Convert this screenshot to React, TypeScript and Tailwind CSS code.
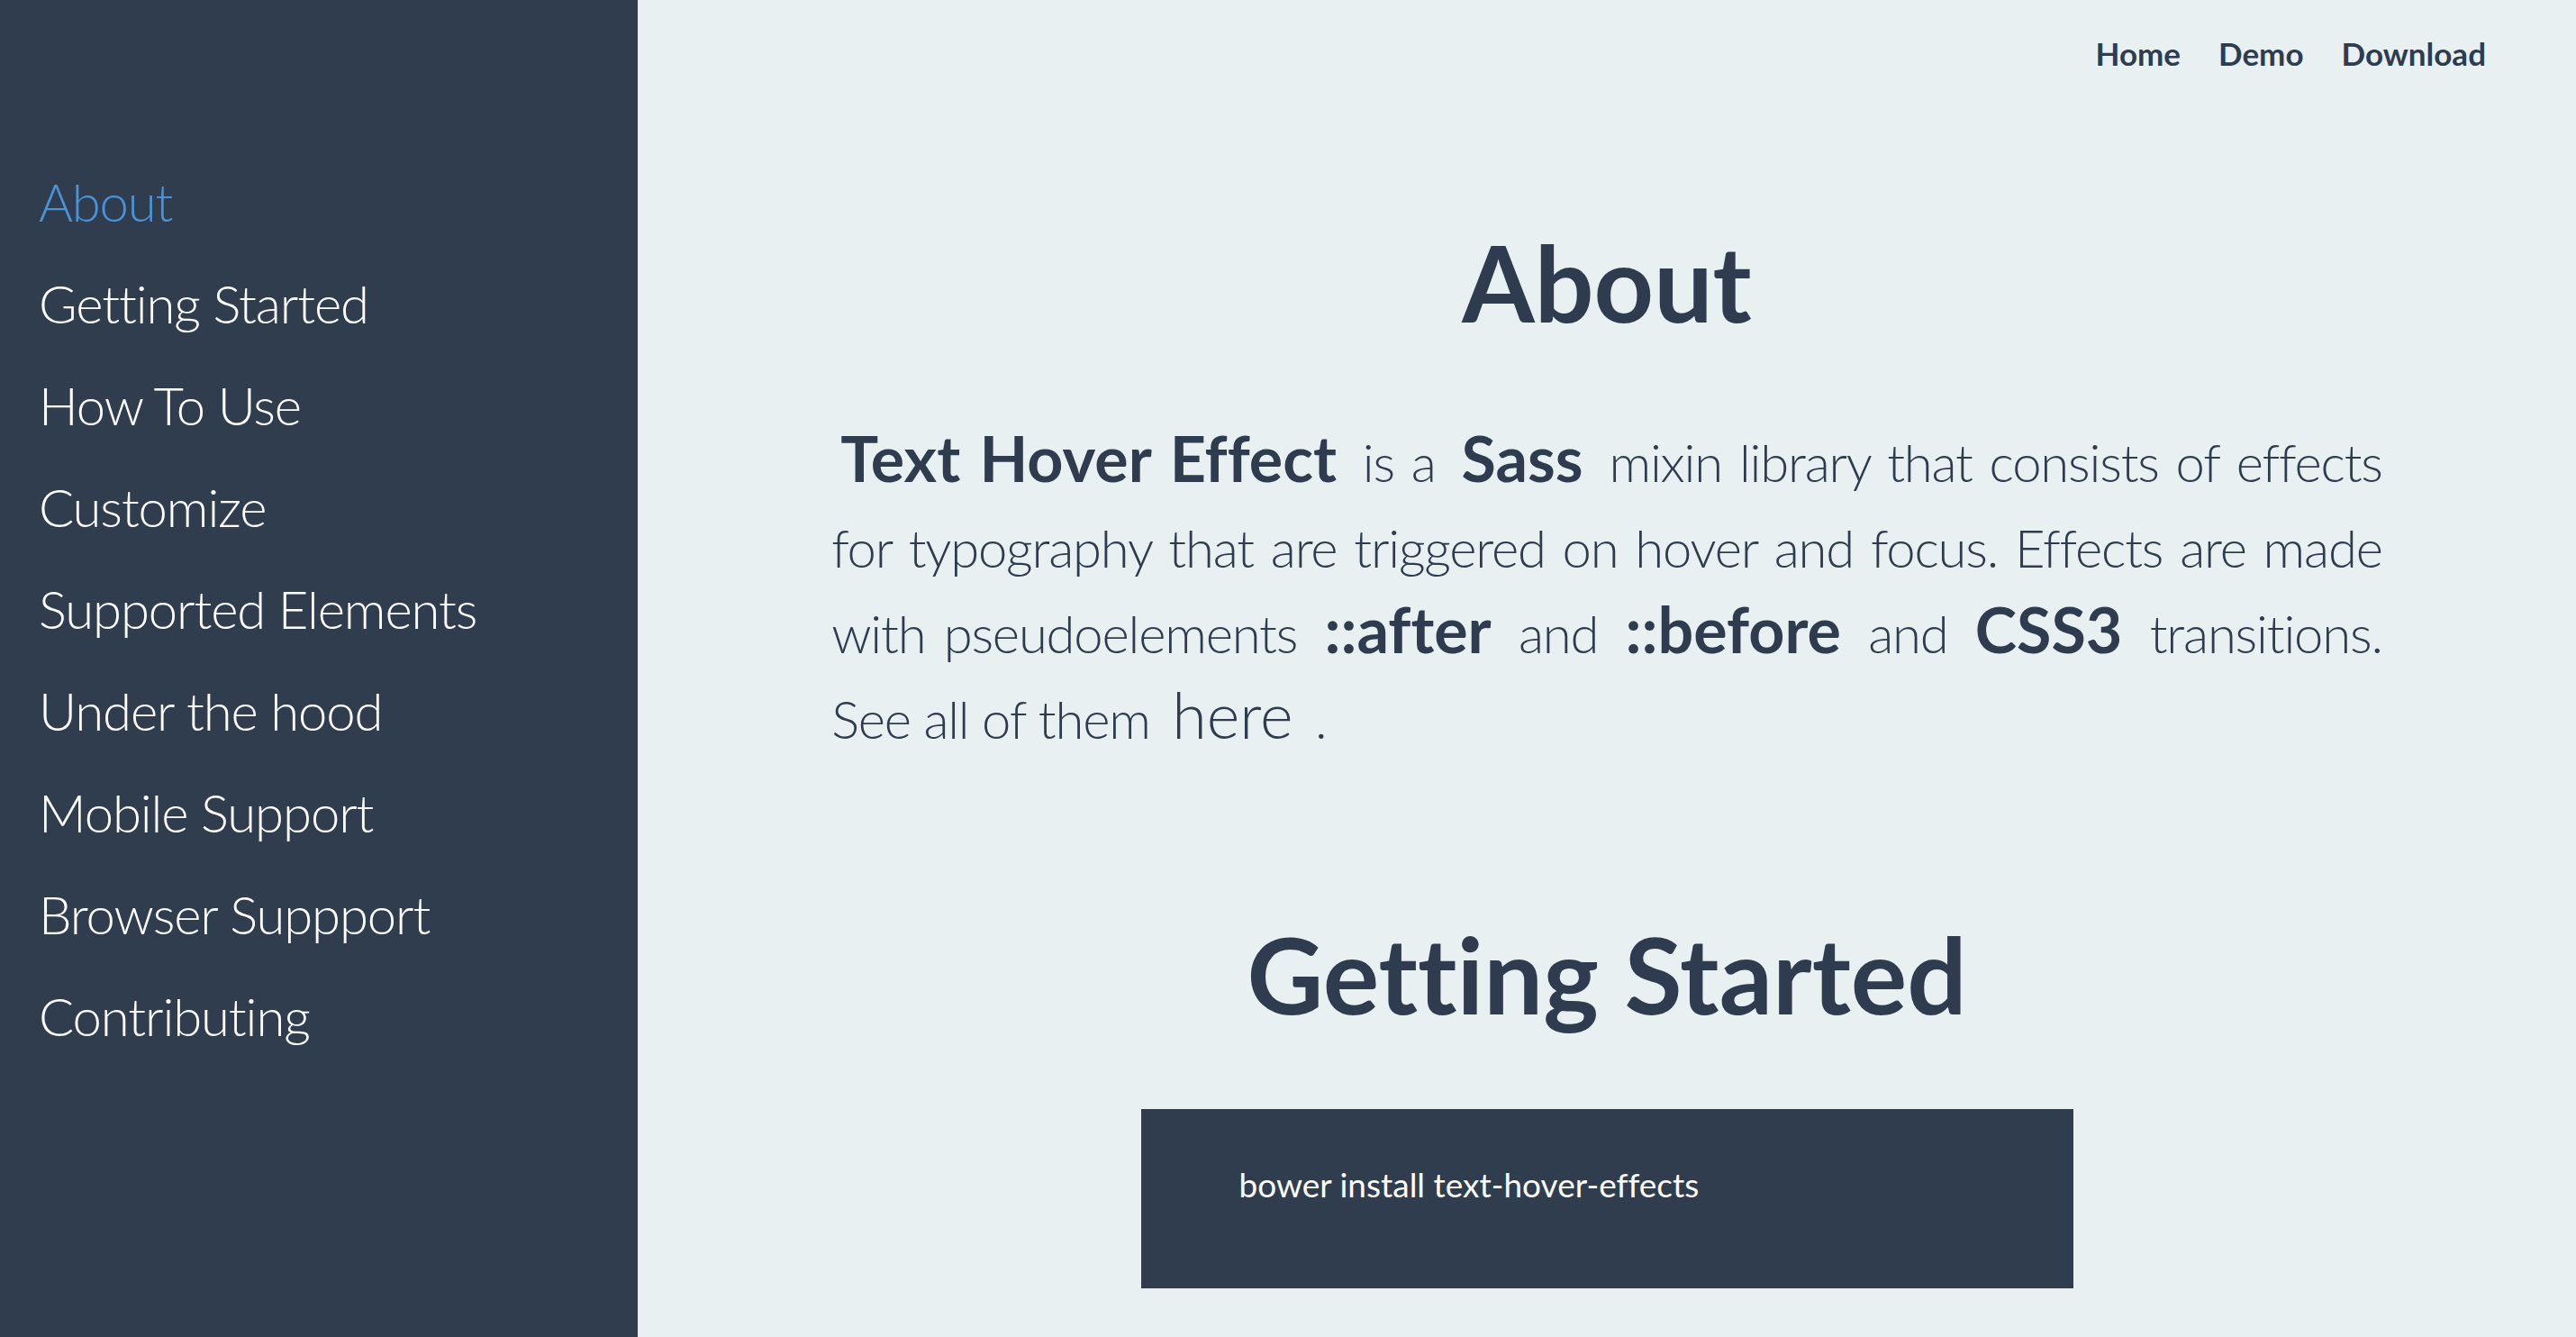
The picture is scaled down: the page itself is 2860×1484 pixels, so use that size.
const menu = [
  "About",
  "Getting Started",
  "How To Use",
  "Customize",
  "Supported Elements",
  "Under the hood",
  "Mobile Support",
  "Browser Suppport",
  "Contributing",
];

const links = ["Home", "Demo", "Download"];

function Em({ children }: { children: React.ReactNode }) {
  return (
    <strong className="px-[10px] text-[70px] font-bold leading-none tracking-normal">{children}</strong>
  );
}

export default function App() {
  return (
    <div className="flex h-screen overflow-hidden bg-[#e8f0f2] font-['Lato',sans-serif] text-[#2f3c4f] [font-variant-ligatures:none]">
      <aside className="w-[708px] shrink-0 bg-[#303d4f] pl-[43px] pt-[189px]">
        <ul className="flex flex-col gap-[43px]">
          {menu.map((item, i) => (
            <li
              key={item}
              className={`text-[58px] font-light leading-[70px] tracking-[-1.1px] ${i === 0 ? "text-[#4a93d8]" : "text-white"}`}
            >
              {item}
            </li>
          ))}
        </ul>
      </aside>

      <main className="flex-1">
        <nav className="flex justify-end gap-[42px] pr-[100px] pt-[38px]">
          {links.map((l) => (
            <a key={l} className="text-[35px] font-bold leading-[43px]">
              {l}
            </a>
          ))}
        </nav>

        <section className="mt-[162px] flex flex-col items-center">
          <h1 className="text-[116px] font-bold leading-[142px]">About</h1>
          <p className="mt-[80px] w-[80%] text-justify text-[58px] font-light leading-[95px] tracking-[-1.2px]">
            <Em>Text Hover Effect</Em> is a <Em>Sass</Em> mixin library that consists of effects for
            typography that are triggered on hover and focus. Effects are made with pseudoelements{" "}
            <Em>::after</Em> and <Em>::before</Em> and <Em>CSS3</Em> transitions. See all of them{" "}
            <a className="px-[10px] text-[70px] leading-none tracking-normal">here</a> .
          </p>

          <h1 className="mt-[165px] text-[117px] font-bold leading-[142px]">Getting Started</h1>
          <pre className="mt-[79px] h-[199px] w-[1035px] bg-[#303d4f] pl-[109px] pt-[62px] font-['Lato',sans-serif] text-[37px] leading-[43px] text-white">
            bower install text-hover-effects
          </pre>
        </section>
      </main>
    </div>
  );
}
